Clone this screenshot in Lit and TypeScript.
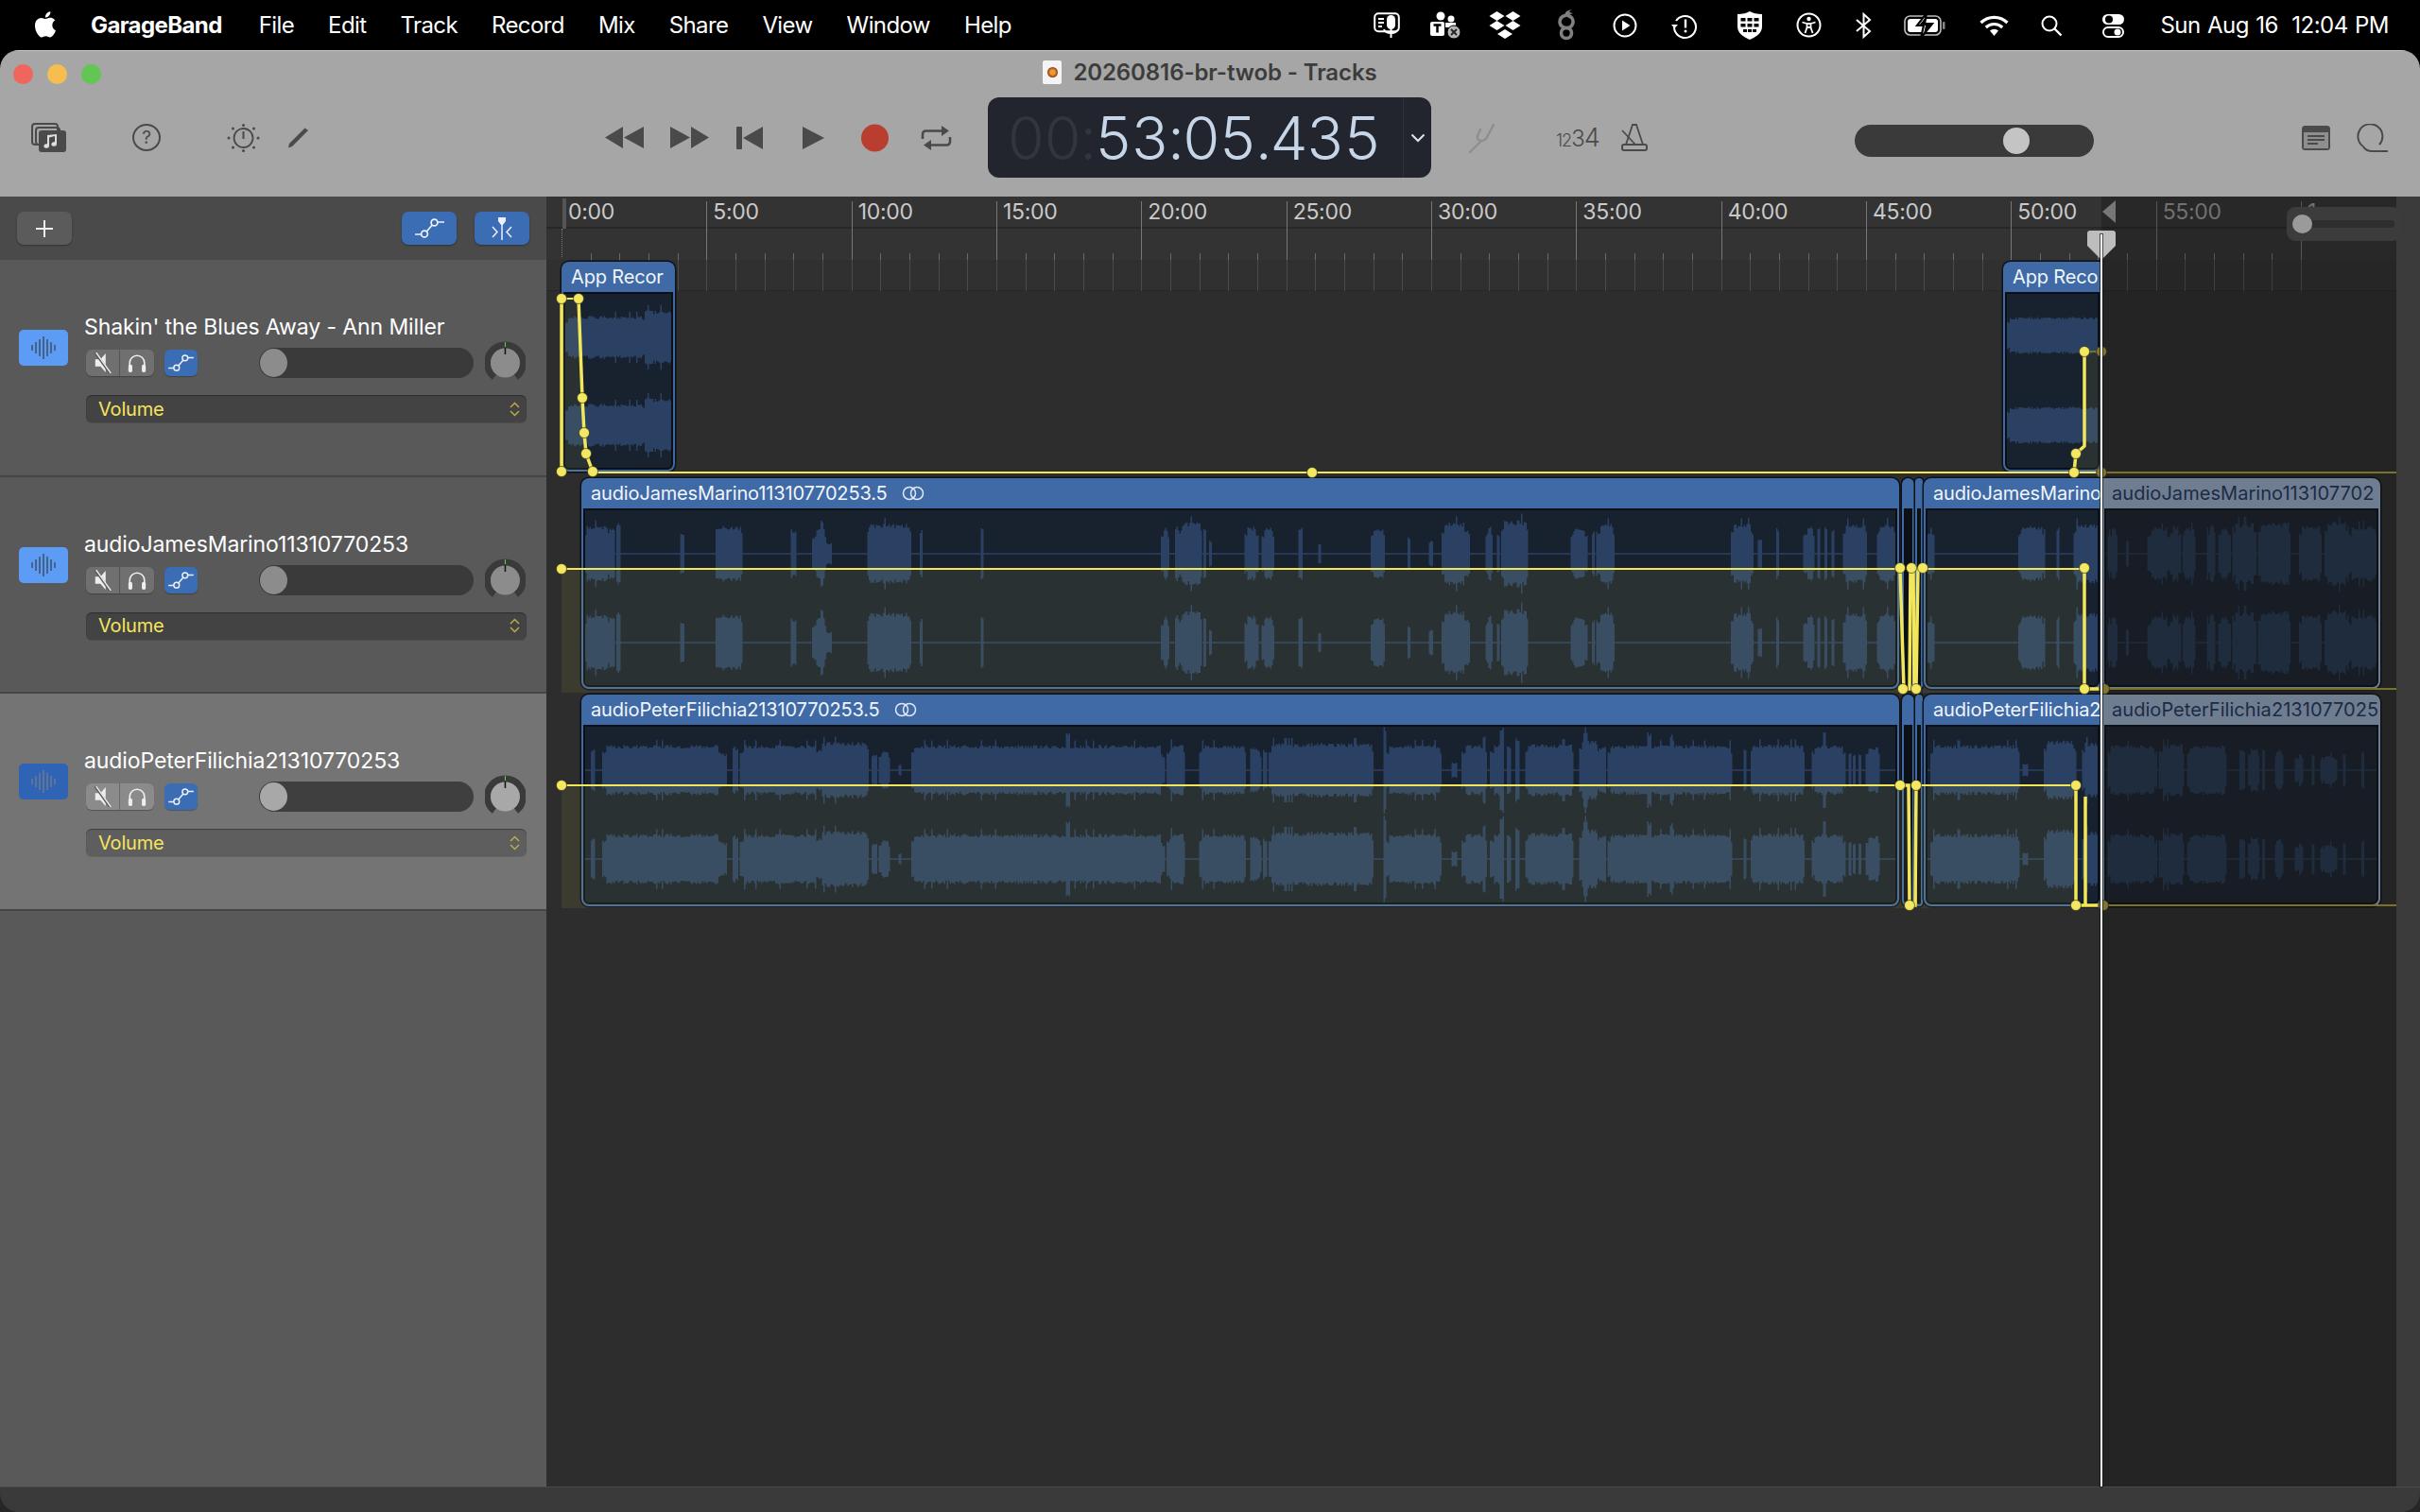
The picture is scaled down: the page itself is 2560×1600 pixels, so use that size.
import { LitElement, html, css, svg } from 'lit'
import { customElement, property } from 'lit/decorators.js'

const UI = `Inter, 'Liberation Sans', sans-serif`

// page coordinates of the arrange canvas
const CX = 578
const CY = 208
const END = 2223
const PX_PER_MIN = 30.667
const ZERO = 594

type Burst = number[]

const rnd = (n: number) => {
  const v = Math.sin(n * 12.9898) * 43758.5453
  return v - Math.floor(v)
}

const from = (origin: number, factor: number, list: Burst[], amp: number): Burst[] =>
  list.map(([a, b, h]) => [origin + a / factor, origin + b / factor, h ?? amp])

// one channel as a filled step outline, same noise top and bottom like a real peak file
const channel = (x0: number, x1: number, cy: number, bursts: Burst[]) => {
  const top: string[] = []
  const bottom: string[] = []
  for (let x = Math.floor(x0); x < x1; x += 1.5) {
    let amp = 0.8
    for (const [a, b, h] of bursts) {
      if (x + 1.5 < a || x > b) continue
      const edge = Math.min(x - a, b - x)
      const n = rnd(x * 0.37 + a)
      let v = h * (edge < 2 && b - a > 6 ? 0.74 : 1) * (0.84 + 0.16 * n)
      if (n > 0.94 && b - a > 6) v *= 1.18
      amp = Math.max(amp, v)
    }
    top.push(`${x},${(cy - amp).toFixed(1)} ${x + 1.5},${(cy - amp).toFixed(1)}`)
    bottom.unshift(`${x + 1.5},${(cy + amp).toFixed(1)} ${x},${(cy + amp).toFixed(1)}`)
  }
  return `M${top.join(' ')} ${bottom.join(' ')}Z`
}

const T2_A = [
  ...from(610, 2.178, [[18,75],[78,85,28],[92,100,34],[240,246,22],[322,382],[495,505,26],[545,572,25],[556,571,38],[575,585,12],[670,770,32],[793,797,26],[932,936,28],[1347,1365,28],[1380,1385,30],[1388,1440,34],[1445,1450,28],[1458,1462,14],[1540,1568,29]], 30),
  ...from(1320, 2.178, [[0,22,28],[33,60,28],[118,124,28],[164,168,11],[285,315,27],[370,374,18],[420,424,14],[447,503,34],[505,509,25],[548,563,30],[575,578,22],[585,645,36],[745,780,28],[793,797,25],[805,845,32],[1113,1163,32],[1178,1182,16],[1218,1222,28],[1282,1305,30],[1315,1318,28],[1330,1333,28],[1345,1350,26],[1372,1425,32],[1450,1490,32]], 30),
]
const T3_A = [
  ...from(610, 2.178, [[35,42,22],[62,330],[335,345,18],[360,372,25],[378,555],[558,672,30],[680,690,17],[698,722,20],[743,747,6],[772,1348],[1130,1134,44],[1350,1354,14],[1362,1400,28],[1436,1540],[1555,1568,25]], 27),
  ...from(1320, 2.178, [[15,30,22],[38,44,22],[48,288,29],[314,318,47],[318,445,27],[470,480,8],[495,548,27],[544,547,40],[560,590,27],[583,587,46],[600,604,25],[618,624,34],[640,750,28],[765,810,32],[776,780,46],[815,825,26],[830,1115,27],[923,927,42],[974,978,42],[1145,1148,24],[1160,1282,28],[1300,1375,27],[1327,1330,44],[1385,1388,18],[1395,1398,18],[1408,1411,18],[1425,1455,25]], 27),
]
const T2_B = from(1950, 2.57, [[228,245],[478,545],[582,585,28],[628,695,32]], 30)
const T2_P = from(1950, 2.57, [[722,745],[770,773,14],[830,885,28],[890,915],[925,955,28],[990,1010,32],[1020,1050,28],[1060,1120,33],[1130,1215,34],[1240,1300],[1310,1370,34],[1375,1450]], 30)
const T3_B = from(1950, 2.57, [[238,478],[490,500,7],[545,630,32],[650,695,30]], 27)
const T3_P = from(1950, 2.57, [[720,850],[860,925,28],[935,1040],[1078,1090,22],[1100,1130,24],[1140,1144,24],[1175,1195,22],[1230,1250,18],[1275,1278,18],[1300,1340,16],[1360,1363,18],[1410,1413,20]], 27)

interface Clip {
  x: number
  w: number
  y: number
  h: number
  title?: string
  link?: boolean
  past?: boolean
  sliver?: boolean
  centers?: number[]
  bursts?: Burst[]
}

const LANE2 = { y: 506, h: 223, centers: [586, 680] }
const LANE3 = { y: 735, h: 224, centers: [815, 909] }

const CLIPS: Clip[] = [
  { x: 594, w: 120, y: 277, h: 222, title: 'App Recor', centers: [357, 450], bursts: [[598, 680, 23], [680, 711, 29]] },
  { x: 2119, w: 104, y: 277, h: 222, title: 'App Reco', centers: [355, 450], bursts: [[2123, 2221, 20]] },
  { x: 615, w: 1394, ...LANE2, title: 'audioJamesMarino11310770253.5', link: true, bursts: T2_A },
  { x: 2012, w: 13, ...LANE2, sliver: true },
  { x: 2026, w: 8, ...LANE2, sliver: true },
  { x: 2035, w: 188, ...LANE2, title: 'audioJamesMarino', bursts: T2_B },
  { x: 2224, w: 294, ...LANE2, title: 'audioJamesMarino113107702', past: true, bursts: T2_P },
  { x: 615, w: 1394, ...LANE3, title: 'audioPeterFilichia21310770253.5', link: true, bursts: T3_A },
  { x: 2012, w: 13, ...LANE3, sliver: true },
  { x: 2026, w: 8, ...LANE3, sliver: true },
  { x: 2035, w: 188, ...LANE3, title: 'audioPeterFilichia2', bursts: T3_B },
  { x: 2224, w: 294, ...LANE3, title: 'audioPeterFilichia2131077025', past: true, bursts: T3_P },
]

const AUTO_FILL = [
  '594,316 612,316 616,421 618,458 620,480 627,499 594,499',
  '2194,500 2196,480 2205,472 2205,372 2223,372 2223,500',
  '594,602 2010,602 2012,733 594,733',
  '2034,602 2205,602 2205,733 2034,733',
  '594,831 2020,831 2020,961 594,961',
  '2027,831 2196,831 2196,961 2027,961',
]
const AUTO_LINES = [
  'M594,499 V316',
  'M612,316 L616,421 L618,458 L620,480 L627,499',
  'M2194,500 L2196,480 L2205,472 V372',
  'M2010,602 L2014,729 H2020 L2021,602 H2024 L2025,729 H2027 L2029,602 H2034',
  'M2205,602 V729 H2223',
  'M2009,831 H2019 L2020,958 H2026 L2027,831',
  'M2196,831 V958 H2205 M2206,843 V958 H2223',
]
const AUTO_THIN = ['M594,316 H612 M627,500 H2223', 'M594,602 H2010 M2034,602 H2205', 'M594,831 H2010 M2027,831 H2196']
const AUTO_DIM = 'M2205,372 H2223 M2223,500 H2535 M2223,729 H2535 M2223,958 H2535'
const HANDLES = [
  [594,316],[612,316],[616,421],[618,458],[620,480],[594,499],[627,499],[1388,500],[2194,500],[2196,480],[2205,372],
  [594,602],[2010,601],[2022,601],[2034,601],[2013,729],[2027,729],[2205,601],[2205,729],
  [594,831],[2010,831],[2027,831],[2020,958],[2196,831],[2196,958],
]
const HANDLES_DIM = [[2223,372],[2223,500],[2226,729],[2225,958]]

// icons
const apple = html`<svg class="apple" viewBox="3.5 1.8 17 20.6"><path fill="#fff" d="M18.71 19.5c-.83 1.24-1.71 2.45-3.05 2.47-1.34.03-1.77-.79-3.29-.79-1.53 0-2 .77-3.27.82-1.31.05-2.3-1.32-3.14-2.53C4.25 17 2.94 12.45 4.7 9.39c.87-1.52 2.43-2.48 4.12-2.51 1.28-.02 2.5.87 3.29.87.78 0 2.26-1.07 3.81-.91.65.03 2.47.26 3.64 1.98-.09.06-2.17 1.28-2.15 3.81.03 3.02 2.65 4.03 2.68 4.04-.03.07-.42 1.44-1.38 2.83M13 3.5c.73-.83 1.94-1.46 2.94-1.5.13 1.17-.34 2.35-1.04 3.19-.69.85-1.83 1.51-2.95 1.42-.15-1.15.41-2.35 1.05-3.11z"/></svg>`

const STATUS = [
  { w: 28, h: 28, ml: 0, vb: '0 0 28 28', body: svg`<rect x="1.2" y="1.2" width="25.6" height="19" rx="4" fill="none" stroke="#fff" stroke-width="2"/><rect x="14" y="3" width="9" height="15" rx="4.5" fill="#fff"/><path d="M5 7h6M5 11h6M5 15h4" stroke="#fff" stroke-width="2"/><path d="M18.5 18v9" stroke="#fff" stroke-width="2"/><path d="M11 18c1 3 4 4 7.500 4s6.500-1 7.500-4" fill="none" stroke="#fff" stroke-width="2"/>` },
  { w: 34, h: 30, ml: 31, vb: '0 0 34 30', body: svg`<circle cx="12" cy="5" r="4.500" fill="#fff"/><circle cx="23" cy="8" r="3.500" fill="#fff"/><rect x="1" y="11" width="15" height="15" rx="2" fill="#fff"/><path d="M4.500 14.500h8M8.500 14.500v8" stroke="#000" stroke-width="2.500"/><path d="M17 12h11v5h-11z" fill="#fff"/><circle cx="26" cy="22" r="7" fill="#b5b5b5" stroke="#000"/><path d="M23 19l6 6M29 19l-6 6" stroke="#222" stroke-width="1.800"/>` },
  { w: 34, h: 29, ml: 29, vb: '0 0 34 29', body: svg`<g fill="#fff"><path d="M8.500 0l8 5-8 5-8-5zM25.500 0l8 5-8 5-8-5zM8.500 10l8 5-8 5-8-5zM25.500 10l8 5-8 5-8-5zM17 19l8 5-8 5-8-5z"/></g>` },
  { w: 18, h: 33, ml: 39, vb: '0 0 18 33', body: svg`<g fill="none" stroke="#808080" stroke-width="3.600"><circle cx="9" cy="25" r="5.500"/><path d="M9 19.500a6.500 6.500 0 0 1-1-13"/><path d="M9 19.500a6.500 6.500 0 0 0 3-12.500c-1-1-2-1-4-.5"/></g><path d="M6 7l3-5 5-2-2 3 4 1-5 2z" fill="#808080"/>` },
  { w: 26, h: 26, ml: 40, vb: '0 0 26 26', body: svg`<circle cx="13" cy="13" r="11.500" fill="none" stroke="#fff" stroke-width="2"/><path d="M10 7.500v11l8.500-5.500z" fill="#fff"/>` },
  { w: 26, h: 26, ml: 37, vb: '0 0 26 26', body: svg`<path d="M4 8a11.500 11.500 0 1 1-2 6.500" fill="none" stroke="#fff" stroke-width="2"/><path d="M-1 12l3.500 4 3.500-4z" fill="#fff"/><path d="M14 6.500v9" stroke="#fff" stroke-width="2.400"/><circle cx="14" cy="19" r="1.500" fill="#fff"/>` },
  { w: 26, h: 30, ml: 43, vb: '0 0 26 30', body: svg`<path d="M13 0c3 2 8 3 13 3v13c0 7-6 11-13 14C6 27 0 23 0 16V3c5 0 10-1 13-3z" fill="#fff"/><g fill="#000"><rect x="3.500" y="7" width="5" height="3.500"/><rect x="10.500" y="7" width="5" height="3.500"/><rect x="17.500" y="7" width="5" height="3.500"/><rect x="3.500" y="13" width="5" height="3.500"/><rect x="10.500" y="13" width="5" height="3.500"/><rect x="17.500" y="13" width="5" height="3.500"/><rect x="6" y="19" width="4" height="3"/><rect x="11" y="19" width="4" height="3"/><rect x="16" y="19" width="4" height="3"/></g>` },
  { w: 27, h: 27, ml: 36, vb: '0 0 27 27', body: svg`<circle cx="13.500" cy="13.500" r="12" fill="none" stroke="#fff" stroke-width="2"/><circle cx="13.500" cy="7" r="2.200" fill="#fff"/><path d="M6.500 10.500l5 1.500v4l-2 6M20.500 10.500l-5 1.500v4l2 6M11.500 12h4v4h-4" fill="none" stroke="#fff" stroke-width="1.800" stroke-linejoin="round"/>` },
  { w: 19, h: 26, ml: 35, vb: '0 0 19 26', body: svg`<path d="M2 7l14 12-6.500 6V1l6.500 6L2 19" fill="none" stroke="#fff" stroke-width="2"/>` },
  { w: 44, h: 22, ml: 33, vb: '0 0 44 22', body: svg`<rect x="1" y="1" width="38" height="20" rx="5.500" fill="none" stroke="#bdbdbd" stroke-width="1.600"/><rect x="41" y="7" width="2.500" height="8" rx="1" fill="#888"/><rect x="4" y="4" width="32" height="14" rx="3" fill="#fff"/><path d="M24 -2l-10 13h7l-3 13 12-15h-8z" fill="#fff" stroke="#000" stroke-width="2.200"/><path d="M24 1l-8 10h7l-2 9 9-11h-8z" fill="#000"/>` },
  { w: 31, h: 22, ml: 36, vb: '0 0 31 22', body: svg`<g fill="none" stroke="#fff" stroke-width="3.200"><path d="M1.500 8a20 20 0 0 1 28 0"/><path d="M6.800 13a12.500 12.500 0 0 1 17.400 0"/></g><path d="M11 16.500a6.500 6.500 0 0 1 9 0l-4.500 5.500z" fill="#fff"/>` },
  { w: 23, h: 22, ml: 34, vb: '0 0 23 22', body: svg`<circle cx="9" cy="9" r="7.500" fill="none" stroke="#fff" stroke-width="2"/><path d="M14.500 14.500l7 7" stroke="#fff" stroke-width="2.400"/>` },
  { w: 25, h: 26, ml: 41, vb: '0 0 25 26', body: svg`<rect x="1" y="1" width="23" height="11" rx="5.500" fill="#fff"/><circle cx="8" cy="6.500" r="4" fill="#000"/><rect x="2" y="15" width="21" height="10" rx="5" fill="none" stroke="#fff" stroke-width="2"/><circle cx="17" cy="20" r="3.500" fill="#fff"/>` },
]

const ink = '#4a4a4a'
const mediaIcon = html`<svg class="media" width="37" height="31" viewBox="0 0 37 31"><rect x="1" y="1" width="27" height="22" rx="3" fill="none" stroke="${ink}" stroke-width="2"/><rect x="5" y="5" width="25" height="18" rx="3" fill="none" stroke="${ink}" stroke-width="2"/><rect x="8" y="8" width="29" height="23" rx="3" fill="${ink}"/><path d="M27 13v10.500a2.800 2.300 0 1 1-2-2.200V15l-6 1.500v9a2.800 2.300 0 1 1-2-2.200V14z" transform="translate(0 -1)" fill="#ddd"/></svg>`
const helpIcon = html`<div class="help">?</div>`
const dialIcon = html`<svg class="dial" width="35" height="30" viewBox="0 0 35 30"><circle cx="17.500" cy="15" r="10" fill="none" stroke="${ink}" stroke-width="1.800"/><path d="M17.500 8v8" stroke="${ink}" stroke-width="2"/><g fill="${ink}"><circle cx="17.500" cy="1.500" r="1.500"/><circle cx="17.500" cy="28.500" r="1.500"/><circle cx="2" cy="15" r="1.500"/><circle cx="33" cy="15" r="1.500"/><circle cx="6.500" cy="5" r="1.500"/><circle cx="28.500" cy="5" r="1.500"/><circle cx="6.500" cy="25" r="1.500"/><circle cx="28.500" cy="25" r="1.500"/></g></svg>`
const pencilIcon = html`<svg class="pencil" width="24" height="23" viewBox="0 0 24 23"><path d="M18.500 1.500l3.500 2.500L5 21l-4 1.500L2 18z" fill="${ink}"/></svg>`
const rewind = html`<svg class="rew" width="41" height="23" viewBox="0 0 41 23"><path d="M0 11.500L19 0v23zM20 11.500L41 0v23z" fill="${ink}"/></svg>`
const forward = html`<svg class="ffw" width="41" height="23" viewBox="0 0 41 23"><path d="M0 0l21 11.500L0 23zM22 0l19 11.500L22 23z" fill="${ink}"/></svg>`
const toStart = html`<svg class="start" width="28" height="24" viewBox="0 0 28 24"><rect width="6" height="24" rx="1" fill="${ink}"/><path d="M7 12L28 0v24z" fill="${ink}"/></svg>`
const play = html`<svg class="play" width="23" height="24" viewBox="0 0 23 24"><path d="M0 0l23 12L0 24z" fill="${ink}"/></svg>`
const record = html`<svg class="rec" width="29" height="30" viewBox="0 0 29 30"><circle cx="14.500" cy="15" r="14.500" fill="#b93e30"/></svg>`
const cycle = html`<svg class="cycle" width="33" height="26" viewBox="0 0 33 26"><g fill="none" stroke="${ink}" stroke-width="2.600"><path d="M2 14V9a3.500 3.500 0 0 1 3.500-3.500H25"/><path d="M31 12v5a3.500 3.500 0 0 1-3.500 3.500H8"/></g><path d="M22 0l8 5.500-8 5.500zM11 15l-8 5.500 8 5.500z" fill="${ink}"/></svg>`
const tuner = html`<svg class="tuner" width="31" height="32" viewBox="0 0 31 32"><g fill="none" stroke="#8e8e8e" stroke-width="2.400" stroke-linecap="round"><path d="M3 31L15 19"/><path d="M14 7l-3 7c-1 3 1 5 4 5s5-2 6-4L28 2"/></g></svg>`
const metronome = html`<svg class="metro" width="30" height="29" viewBox="0 0 30 29"><path d="M13 1h4l7 21H6z" fill="none" stroke="${ink}" stroke-width="1.800"/><path d="M2 7l14 15" stroke="${ink}" stroke-width="1.800"/><rect x="2" y="22" width="26" height="6" rx="2" fill="none" stroke="${ink}" stroke-width="2"/></svg>`
const notes = html`<svg class="notes" width="30" height="26" viewBox="0 0 30 26"><rect width="30" height="26" rx="3.500" fill="${ink}"/><rect x="2" y="7" width="26" height="17" fill="#a5a5a5" opacity=".75"/><path d="M6 11h18M6 15h18M6 19h11" stroke="${ink}" stroke-width="2"/></svg>`
const loops = html`<svg class="loops" width="34" height="30" viewBox="0 0 34 30"><g fill="none" stroke="${ink}" stroke-width="2"><path d="M8 24A13 13 0 1 1 25 22"/><path d="M8 24C10 28 14 29 18 29H34"/></g></svg>`
const autoGlyph = (w: number, h: number) => html`<svg width="${w}" height="${h}" viewBox="0 0 31 21"><g fill="none" stroke="#eef2fa" stroke-width="1.700"><circle cx="20.500" cy="4.500" r="3.400"/><circle cx="10" cy="16.500" r="3.400"/><path d="M12.300 14l6-7M24 4h7M0 17h6.500"/></g></svg>`
const fitIcon = html`<svg viewBox="0 0 30 26" width="30" height="26"><path d="M11 1h8v4l-3 4h-2l-3-4z" fill="#eef"/><path d="M15 8v17M5 11l5 5.500-5 5.500M25 11l-5 5.500 5 5.500" fill="none" stroke="#eef" stroke-width="1.500"/></svg>`
const muteIcon = html`<svg viewBox="0 0 24 24" width="24" height="22"><path d="M3 8h6l6-7v22l-6-7H3z" fill="#eee"/><path d="M3 0l17 24" stroke="#5c5c5c" stroke-width="3"/><path d="M4 0l17 24" stroke="#eee" stroke-width="1.500"/></svg>`
const soloIcon = html`<svg viewBox="0 0 24 24" width="24" height="22"><path d="M3.500 17v-5a8.500 8.500 0 0 1 17 0v5" fill="none" stroke="#eee" stroke-width="1.800"/><rect x="2" y="14" width="4.500" height="9" rx="2" fill="#eee"/><rect x="17.500" y="14" width="4.500" height="9" rx="2" fill="#eee"/></svg>`
const linkIcon = html`<svg class="link" width="26" height="16" viewBox="0 0 26 16"><circle cx="9" cy="8" r="6.500" fill="none" stroke="#dfe8f4" stroke-width="1.500"/><circle cx="17" cy="8" r="6.500" fill="none" stroke="#dfe8f4" stroke-width="1.500"/></svg>`

@customElement('gb-menubar')
class GbMenubar extends LitElement {
  static styles = css`
    :host {
      display: flex;
      align-items: center;
      height: 53px;
      padding: 0 33px 0 36px;
      background: #000;
      color: #fff;
      font: 400 24px ${css([UI] as unknown as TemplateStringsArray)};
      letter-spacing: -0.6px;
    }
    .apple { width: 24px; height: 28px; margin-right: 36px; margin-top: -2px; }
    .menus { display: flex; gap: 36px; }
    .app { font-weight: 700; margin-right: 3px; }
    .status { display: flex; align-items: center; margin-left: auto; }
    .status svg { display: block; overflow: visible; }
    .clock { margin-left: 37px; letter-spacing: -0.5px; word-spacing: 1px; white-space: pre; }
  `
  render() {
    return html`
      ${apple}
      <div class="menus">
        <span class="app">GarageBand</span>
        ${['File', 'Edit', 'Track', 'Record', 'Mix', 'Share', 'View', 'Window', 'Help'].map((m) => html`<span>${m}</span>`)}
      </div>
      <div class="status">
        ${STATUS.map((s) => html`<svg width="${s.w}" height="${s.h}" viewBox="${s.vb}" style="margin-left:${s.ml}px">${s.body}</svg>`)}
        <span class="clock">Sun Aug 16  12:04 PM</span>
      </div>
    `
  }
}

@customElement('gb-toolbar')
class GbToolbar extends LitElement {
  static styles = css`
    :host {
      display: block;
      height: 155px;
      background: #a6a6a6;
      color: #3c3c3c;
      font-family: ${css([UI] as unknown as TemplateStringsArray)};
      box-shadow: inset 0 1px 0 #c4c4c4;
    }
    .titlebar {
      display: grid;
      grid-template-columns: 1fr auto 1fr;
      align-items: center;
      height: 50px;
    }
    .lights { display: flex; gap: 15px; padding-left: 14px; }
    .lights i { width: 21px; height: 21px; border-radius: 50%; }
    .red { background: #f0665c; }
    .yellow { background: #f6bd4f; }
    .green { background: #63c554; }
    .title { display: flex; align-items: center; gap: 12px; padding-bottom: 3px; font-size: 24px; font-weight: 600; letter-spacing: -0.1px; }
    .doc { width: 20px; height: 25px; background: #f4f4f4; border-radius: 2px; display: grid; place-items: center; }
    .doc i { width: 11px; height: 11px; border-radius: 50%; background: radial-gradient(#f29a2e 30%, #6a2410 80%); }
    .controls { display: flex; align-items: center; height: 85px; padding-left: 33px; }
    .help {
      box-sizing: border-box;
      width: 30px;
      height: 29px;
      margin-left: 70px;
      border: 2px solid #4a4a4a;
      border-radius: 50%;
      font-size: 19px;
      line-height: 25px;
      text-align: center;
      color: #4a4a4a;
    }
    .dial { margin-left: 70px; }
    .pencil { margin-left: 29px; }
    .rew { margin-left: 312px; }
    .ffw { margin-left: 28px; }
    .start { margin-left: 29px; }
    .play { margin-left: 42px; }
    .rec { margin-left: 39px; }
    .cycle { margin-left: 34px; }
    .lcd {
      display: flex;
      align-items: center;
      box-sizing: border-box;
      width: 469px;
      height: 85px;
      margin-left: 38px;
      border-radius: 12px;
      background: #22252d;
      color: #c6d6e8;
      font-weight: 300;
      font-size: 63px;
      font-variant-numeric: tabular-nums;
      letter-spacing: -1.9px;
    }
    .time { flex: 1; padding-left: 20px; white-space: pre; }
    .time b { font-weight: 300; color: #31353e; }
    .more { width: 29px; height: 85px; display: grid; place-items: center; border-left: 1px solid #2f323a; }
    .tuner { margin-left: 38px; }
    .count { margin-left: 63px; color: #4a4a4a; width: 48px; font-weight: 300; font-size: 27px; letter-spacing: -1px; white-space: nowrap; }
    .count small { font-size: 18px; }
    .count span { font-size: 24px; }
    .metro { margin-left: 20px; }
    .master {
      position: relative;
      box-sizing: border-box;
      width: 253px;
      height: 34px;
      margin: 6px 0 0 218px;
      border-radius: 17px;
      background: #3a3a3a;
    }
    .master i {
      position: absolute;
      left: 157px;
      top: 3px;
      width: 28px;
      height: 28px;
      border-radius: 50%;
      background: #c4c4c4;
    }
    .notes { margin-left: 220px; }
    .loops { margin-left: 27px; }
  `
  render() {
    return html`
      <div class="titlebar">
        <div class="lights"><i class="red"></i><i class="yellow"></i><i class="green"></i></div>
        <div class="title"><div class="doc"><i></i></div>20260816-br-twob - Tracks</div>
        <div></div>
      </div>
      <div class="controls">
        ${mediaIcon}${helpIcon}${dialIcon}${pencilIcon}
        ${rewind}${forward}${toStart}${play}${record}${cycle}
        <div class="lcd">
          <div class="time"><b>00:</b>53:05.435</div>
          <div class="more">
            <svg width="16" height="10" viewBox="0 0 16 10"><path d="M1.500 1.500L8 8l6.500-6.500" fill="none" stroke="#dfe6ee" stroke-width="2"/></svg>
          </div>
        </div>
        ${tuner}
        <div class="count"><small>1</small><small>2</small><span>3</span>4</div>
        ${metronome}
        <div class="master"><i></i></div>
        ${notes}${loops}
      </div>
    `
  }
}

@customElement('gb-track')
class GbTrack extends LitElement {
  @property() name = ''
  @property({ type: Boolean, reflect: true }) selected = false

  static styles = css`
    :host {
      --row: #595959;
      --icon: #5c9cf5;
      --bars: #46618c;
      --btn: #707070;
      --groove: #3a3a3a;
      --thumb: #8c8c8c;
      --select: #434343;
      display: flex;
      box-sizing: border-box;
      height: 229.500px;
      background: var(--row);
      border-bottom: 2px solid #454545;
      font-family: ${css([UI] as unknown as TemplateStringsArray)};
      color: #fff;
    }
    :host([selected]) {
      --row: #747474;
      --icon: #2f63b5;
      --bars: #5f7396;
      --btn: #8b8b8b;
      --groove: #3f3f3f;
      --thumb: #a8a8a8;
      --select: #5e5e5e;
    }
    .icon {
      display: grid;
      place-items: center;
      width: 52px;
      height: 38px;
      margin: 74px 0 0 20px;
      border-radius: 5px;
      background: var(--icon);
    }
    .info { width: 467px; margin-left: 17px; padding-top: 57px; }
    .name { height: 30px; font-size: 23px; line-height: 28px; letter-spacing: -0.1px; white-space: nowrap; }
    .row { display: flex; align-items: center; height: 28px; margin: 8px 0 0 2px; }
    .pair { display: flex; width: 72px; height: 28px; border-radius: 6px; background: var(--btn); box-shadow: 0 1px 1px #0004; }
    .pair div { flex: 1; display: grid; place-items: center; }
    .pair div + div { border-left: 1px solid #00000040; }
    .auto { display: grid; place-items: center; width: 35px; height: 28px; margin-left: 11px; border-radius: 6px; background: #3b6db5; box-shadow: 0 1px 1px #0004; }
    .slider { width: 228px; height: 32px; margin-left: 65px; border-radius: 16px; background: var(--groove); display: flex; align-items: center; }
    .slider i { width: 29px; height: 30px; margin-left: 1px; border-radius: 50%; background: var(--thumb); }
    .knob { margin: -4px 0 0 12px; }
    .select {
      display: flex;
      align-items: center;
      justify-content: space-between;
      box-sizing: border-box;
      width: 466px;
      height: 29px;
      margin: 20px 0 0 2px;
      padding: 0 7px 0 13px;
      border-radius: 6px;
      background: var(--select);
      box-shadow: inset 0 1px 1px #0005, 0 1px 0 #0002;
      color: #f5e55f;
      font-size: 20px;
      letter-spacing: -0.2px;
    }
  `
  render() {
    return html`
      <div class="icon">
        <svg width="26" height="24" viewBox="0 0 26 24">
          <path d="M1 9v6M5 6v12M9 3v18M13 0v24M17 3v18M21 6v12M25 9v6" stroke="var(--bars)" stroke-width="2"/>
        </svg>
      </div>
      <div class="info">
        <div class="name">${this.name}</div>
        <div class="row">
          <div class="pair"><div>${muteIcon}</div><div>${soloIcon}</div></div>
          <div class="auto">${autoGlyph(27, 18)}</div>
          <div class="slider"><i></i></div>
          <svg class="knob" width="43" height="42" viewBox="0 0 43 42">
            <path d="M10 38A19 19 0 1 1 33 38" fill="none" stroke="#3a3a3a" stroke-width="7"/>
            <circle cx="21.500" cy="23" r="15.500" fill="var(--thumb)"/>
            <path d="M21.500 1v5" stroke="#6ad060" stroke-width="1"/>
            <path d="M21.500 7v7" stroke="#111" stroke-width="1.500"/>
          </svg>
        </div>
        <div class="select">
          <span>Volume</span>
          <svg width="11" height="16" viewBox="0 0 11 16"><path d="M1 6l4.500-4.500L10 6M1 10l4.500 4.500L10 10" fill="none" stroke="#bba94a" stroke-width="1.500"/></svg>
        </div>
      </div>
    `
  }
}

@customElement('gb-arrange')
class GbArrange extends LitElement {
  static styles = css`
    :host {
      position: relative;
      display: block;
      flex: 1;
      background: #2d2d2d;
      font-family: ${css([UI] as unknown as TemplateStringsArray)};
    }
    .ruler { height: 100px; background: #333; }
    .ruler div { height: 34px; border-bottom: 2px solid #272727; box-sizing: border-box; }
    .ruler section { height: 33px; margin-top: 33px; background: #303030; border-bottom: 1px solid #272727; box-sizing: border-box; }
    .past { position: absolute; top: 0; bottom: 0; right: 0; background: #00000033; }
    .canvas { position: absolute; inset: 0; width: 100%; height: 100%; pointer-events: none; overflow: visible; }
    .label { position: absolute; top: 5px; font-size: 23px; line-height: 22px; letter-spacing: -0.3px; color: #c9c9c9; }
    .label.dim { color: #717171; }
    .clip {
      position: absolute;
      display: flex;
      flex-direction: column;
      box-sizing: border-box;
      border-radius: 8px;
      background: #3f6aa5;
      box-shadow: 0 0 0 1.500px #0e1116;
      overflow: hidden;
      color: #f0f5fb;
      font-size: 20px;
      letter-spacing: -0.15px;
    }
    .clip.past-clip { background: #6f7d91; color: #1d2a45; border-radius: 0 8px 8px 0; letter-spacing: 0.05px; }
    .clip.past-clip .body { background: #171c25; border-color: #0d1015; }
    .clip.cut { border-radius: 8px 0 0 8px; }
    .head { display: flex; align-items: center; gap: 14px; height: 32px; flex: none; padding-left: 10px; white-space: nowrap; overflow: hidden; }
    .body { position: relative; flex: 1; margin: 0 2px 2px; border: 2px solid #0c0f14; border-radius: 0 0 6px 6px; background: #18222f; overflow: hidden; }
    .body svg { position: absolute; inset: 0; width: 100%; height: 100%; }
    .clip.sliver .body { background: #0b1017; }
    .head .link { flex: none; }
    .headmark { position: absolute; left: 17px; top: 2px; width: 4px; height: 32px; background: #555; }
    .start { position: absolute; left: 16px; top: 34px; height: 30px; border-left: 1px dotted #777; }
    .end { position: absolute; left: 1646px; top: 4px; }
    .playhead { position: absolute; left: 1630px; top: 36px; }
    .line { position: absolute; left: 1644px; top: 40px; bottom: 0; width: 2px; background: #fff; box-shadow: 0 0 0 1px #111a; }
  `

  private renderClip(c: Clip) {
    const cls = `clip ${c.past ? 'past-clip' : ''} ${c.sliver ? 'sliver' : ''} ${c.x + c.w === END ? 'cut' : ''}`
    const top = c.y + 34
    const left = c.x + 4
    const fill = c.past ? '#1f2c3d' : '#2a4164'
    return html`
      <div class=${cls} style="left:${c.x - CX}px;top:${c.y - CY}px;width:${c.w}px;height:${c.h}px">
        <div class="head">${c.title ? html`<span>${c.title}</span>` : ''}${c.link ? linkIcon : ''}</div>
        <div class="body">
          ${c.bursts ? html`<svg viewBox="${left} ${top} ${c.w - 8} ${c.h - 38}" preserveAspectRatio="none">
            ${c.centers!.map((cy) => svg`<path fill=${fill} d=${channel(left, c.x + c.w - 4, cy, c.bursts!)}></path>`)}
          </svg>` : ''}
        </div>
      </div>
    `
  }

  render() {
    const ticks = Array.from({ length: 61 }, (_, i) => i)
    const xOf = (i: number) => ZERO + i * PX_PER_MIN
    const labels = Array.from({ length: 12 }, (_, i) => i * 5)
    return html`
      <div class="ruler"><div></div><section></section></div>
      <div class="past" style="left:${END - CX}px"></div>
      ${labels.map((m) => html`<span class="label ${xOf(m) > END ? 'dim' : ''}" style="left:${xOf(m) + 7 - CX}px">${m}:00</span>`)}
      <span class="label dim" style="left:${xOf(60) + 7 - CX}px">1</span>
      <span class="headmark"></span>
      <span class="start"></span>
      <svg class="canvas" viewBox="${CX} ${CY} 1957 1365">
        ${ticks.filter((i) => i > 0).map((i) => {
          const x = Math.round(xOf(i)) + 0.5
          const major = i % 5 === 0
          const after = x > END
          return svg`
            <path d="M${x},${major ? 213 : 268} V275" stroke=${after ? '#555' : major ? '#777' : '#6a6a6a'} stroke-width="1"></path>
            <path d="M${x},275 V308" stroke=${after ? '#3d3d3d' : '#4a4a4a'} stroke-width="1"></path>`
        })}
      </svg>
      ${CLIPS.map((c) => this.renderClip(c))}
      <svg class="canvas" viewBox="${CX} ${CY} 1957 1365">
        ${AUTO_FILL.map((p) => svg`<polygon points=${p} fill="rgb(255,240,100)" fill-opacity=".074"></polygon>`)}
        <path d=${AUTO_DIM} fill="none" stroke="#7a7228" stroke-width="2"></path>
        ${AUTO_THIN.map((d) => svg`<path d=${d} fill="none" stroke="#f2e65a" stroke-width="2"></path>`)}
        ${AUTO_LINES.map((d) => svg`<path d=${d} fill="none" stroke="#f2e65a" stroke-width="3.500"></path>`)}
        ${HANDLES.map(([x, y]) => svg`<circle cx=${x} cy=${y} r="5.500" fill="#f4e862" stroke="#26260f" stroke-width=".6"></circle>`)}
        ${HANDLES_DIM.map(([x, y]) => svg`<circle cx=${x} cy=${y} r="5.500" fill="#7f7734" stroke="#26260f" stroke-width=".6"></circle>`)}
      </svg>
      <svg class="end" width="14" height="24" viewBox="0 0 14 24"><path d="M14 0v24L0 12z" fill="#777"></path></svg>
      <svg class="playhead" width="30" height="31" viewBox="0 0 30 31"><path d="M3 0h24a3 3 0 0 1 3 3v13L15 31 0 16V3a3 3 0 0 1 3-3z" fill="#bdbdbd"></path></svg>
      <div class="line"></div>
    `
  }
}

@customElement('app-root')
class AppRoot extends LitElement {
  static styles = css`
    :host {
      display: block;
      width: 2560px;
      height: 1600px;
      overflow: hidden;
      background: linear-gradient(#000 50%, #262626 50%);
    }
    .window { display: flex; flex-direction: column; height: 1547px; border-radius: 20px; overflow: hidden; }
    .main { position: relative; display: flex; height: 1365px; }
    .tracks { display: flex; flex-direction: column; width: 578px; flex: none; background: #4a4a4a; }
    .head { display: flex; align-items: center; gap: 19px; box-sizing: border-box; height: 67px; padding: 0 18px; }
    .btn { display: grid; place-items: center; width: 58px; height: 35px; border-radius: 7px; background: #3b6db5; box-shadow: 0 1px 2px #0005; }
    .btn.add { background: #5b5b5b; margin-right: auto; }
    .rest { flex: 1; background: #595959; }
    .scroll { width: 25px; flex: none; background: #3b3b3b; }
    .zoom {
      position: absolute;
      left: 2419px;
      top: 11px;
      display: flex;
      align-items: center;
      box-sizing: border-box;
      width: 121px;
      height: 36px;
      padding-left: 6px;
      border-radius: 9px;
      background: #3c3c3c;
    }
    .zoom i { width: 21px; height: 20px; border-radius: 50%; background: #9a9a9a; }
    .zoom b { width: 87px; height: 8px; background: #2e2e2e; border-radius: 0 4px 4px 0; }
    .bottom { height: 27px; background: #3a3a3a; box-shadow: inset 0 1px 0 #4a4a4a; }
  `
  render() {
    return html`
      <gb-menubar></gb-menubar>
      <div class="window">
        <gb-toolbar></gb-toolbar>
        <div class="main">
          <div class="tracks">
            <div class="head">
              <div class="btn add">
                <svg width="20" height="20" viewBox="0 0 20 20"><path d="M10 1v18M1 10h18" stroke="#eee" stroke-width="2"></path></svg>
              </div>
              <div class="btn">${autoGlyph(31, 21)}</div>
              <div class="btn">${fitIcon}</div>
            </div>
            <gb-track name="Shakin' the Blues Away - Ann Miller"></gb-track>
            <gb-track name="audioJamesMarino11310770253"></gb-track>
            <gb-track name="audioPeterFilichia21310770253" selected></gb-track>
            <div class="rest"></div>
          </div>
          <gb-arrange></gb-arrange>
          <div class="scroll"></div>
          <div class="zoom"><i></i><b></b></div>
        </div>
        <div class="bottom"></div>
      </div>
    `
  }
}
